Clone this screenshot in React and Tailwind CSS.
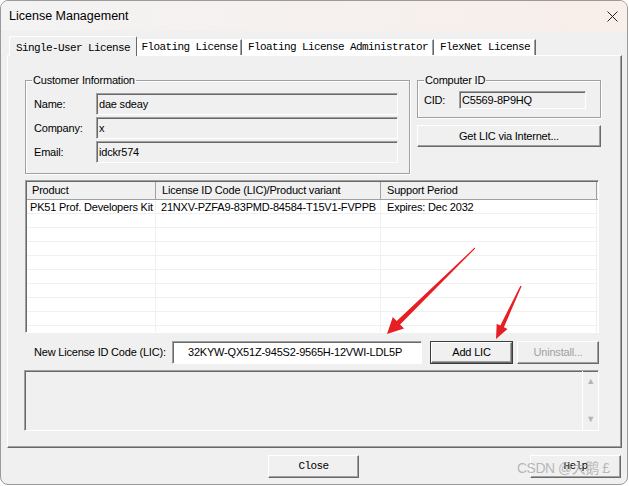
import React from "react";

const sans = "font-['Liberation_Sans',Arial,sans-serif] text-[11px] tracking-[-0.2px] text-black";
const mono = "font-['Liberation_Mono','Courier_New',monospace] text-[11px] tracking-[-0.6px] text-black";

// classic 3D edges
const sunken =
  "border border-t-[#a0a0a0] border-l-[#a0a0a0] border-r-white border-b-white shadow-[inset_1px_1px_0_#696969]";
const raised =
  "border border-t-white border-l-white border-r-[#696969] border-b-[#696969] shadow-[inset_-1px_-1px_0_#a0a0a0] bg-[#f0f0f0]";

function GroupBox({ title, className, legendClass, children }) {
  return (
    <fieldset
      className={`border border-[#a0a0a0] shadow-[inset_1px_1px_0_#fff,1px_1px_0_#fff] ${className}`}
    >
      <legend className={`px-[1px] leading-[13px] ${legendClass}`}>{title}</legend>
      {children}
    </fieldset>
  );
}

function ReadOnly({ value, className }) {
  return (
    <div className={`${sunken} bg-[#f0f0f0] flex items-center pl-[2px] ${className}`}>
      {value}
    </div>
  );
}

function Tabs() {
  const tabs = [
    { label: "Single-User License", w: "w-[128px]", active: true },
    { label: "Floating License", w: "w-[105px]" },
    { label: "Floating License Administrator", w: "w-[192px]" },
    { label: "FlexNet License", w: "w-[102px]" },
  ];
  return (
    <div className={`flex items-end h-[19px] pl-[2px] ${mono}`}>
      {tabs.map((t) =>
        t.active ? (
          <div
            key={t.label}
            className={`${t.w} h-[20px] -mb-[1px] relative z-10 bg-[#f0f0f0] border-t border-l border-white border-r border-r-[#696969] rounded-t-[2px] flex items-start justify-center pt-[3px]`}
          >
            {t.label}
          </div>
        ) : (
          <div
            key={t.label}
            className={`${t.w} h-[16px] bg-white border-t border-l border-white border-r border-r-[#696969] shadow-[inset_-1px_0_0_#a0a0a0] flex items-center justify-center`}
          >
            {t.label}
          </div>
        )
      )}
    </div>
  );
}

function LicenseTable() {
  const rows = Array.from({ length: 10 });
  return (
    <div className={`${sunken} bg-white w-[574px] h-[153px] overflow-hidden mt-[6px]`}>
      <div className="flex h-[18px] bg-[#f0f0f0] border-b border-[#a0a0a0] mt-[1px] ml-[1px]">
        <div className="w-[129px] border-r border-[#a0a0a0] pl-[5px] flex items-center">Product</div>
        <div className="w-[225px] border-r border-[#a0a0a0] pl-[6px] flex items-center">
          License ID Code (LIC)/Product variant
        </div>
        <div className="w-[216px] border-r border-[#a0a0a0] pl-[6px] flex items-center">Support Period</div>
      </div>
      {rows.map((_, i) => (
        <div key={i} className="flex h-[14px] border-b border-[#f0f0f0] ml-[1px]">
          <div className="w-[129px] border-r border-[#f0f0f0] pl-[3px] leading-[14px] whitespace-nowrap">
            {i === 0 ? "PK51 Prof. Developers Kit" : ""}
          </div>
          <div className="w-[225px] border-r border-[#f0f0f0] pl-[5px] leading-[14px] whitespace-nowrap">
            {i === 0 ? "21NXV-PZFA9-83PMD-84584-T15V1-FVPPB" : ""}
          </div>
          <div className="w-[216px] border-r border-[#f0f0f0] pl-[6px] leading-[14px] whitespace-nowrap">
            {i === 0 ? "Expires: Dec 2032" : ""}
          </div>
        </div>
      ))}
    </div>
  );
}

function Arrows() {
  return (
    <svg className="absolute left-0 top-0 pointer-events-none" width="629" height="486">
      <polygon
        fill="#e81e25"
        points="475.3,248.4 400.1,324.6 404,328.5 387,334 392.8,317.1 396.7,321 474.7,247.6"
      />
      <polygon
        fill="#e81e25"
        points="521.6,286.3 503.9,327.3 507.5,329 496,339 496.7,323.8 500.3,325.5 520.4,285.7"
      />
    </svg>
  );
}

export default function App() {
  return (
    <div className="relative w-[629px] h-[486px] bg-white">
      <div className={`w-[628px] h-[485px] border border-[#9a9a9a] rounded-[8px] overflow-hidden bg-[#f0f0f0] ${sans}`}>
        {/* Title bar */}
        <div className="h-[30px] flex items-center justify-between pl-[8px] pr-[9px] bg-gradient-to-r from-[#f3f3f3] to-[#f8eeea]">
          <span className="font-['Liberation_Sans',Arial,sans-serif] text-[12.5px] tracking-normal">
            License Management
          </span>
          <svg width="11" height="11" viewBox="0 0 11 11">
            <path d="M0.5 0.5 L10.5 10.5 M10.5 0.5 L0.5 10.5" stroke="#222" strokeWidth="1" />
          </svg>
        </div>

        <div className="pl-[6px] pt-[5px]">
          <Tabs />
          {/* Tab panel */}
          <div className="w-[615px] h-[393px] border-t border-l border-white border-r border-b border-r-[#696969] border-b-[#696969] shadow-[inset_-1px_-1px_0_#a0a0a0] pl-[17px] pt-[18px]">
            <div className="flex gap-[7px]">
              <GroupBox
                title="Customer Information"
                legendClass="-ml-[2px]"
                className="w-[385px] h-[100px] pl-[8px] pt-[6px]"
              >
                {[
                  ["Name:", "dae sdeay"],
                  ["Company:", "x"],
                  ["Email:", "idckr574"],
                ].map(([label, value]) => (
                  <div key={label} className="flex items-center h-[22px] mb-[2px]">
                    <span className="w-[62px]">{label}</span>
                    <ReadOnly value={value} className="w-[302px] h-[22px]" />
                  </div>
                ))}
              </GroupBox>

              <div className="w-[184px] flex flex-col">
                <GroupBox title="Computer ID" legendClass="ml-0" className="h-[44px] pl-[6px] pt-[4px]">
                  <div className="flex items-center h-[18px]">
                    <span className="w-[35px]">CID:</span>
                    <ReadOnly value="C5569-8P9HQ" className="w-[127px] h-[18px]" />
                  </div>
                </GroupBox>
                <button className={`${raised} mt-[7px] h-[22px] w-[184px] text-center`}>
                  Get LIC via Internet...
                </button>
              </div>
            </div>

            <LicenseTable />

            <div className="flex items-center mt-[8px] h-[23px]">
              <span className="pl-[9px] w-[147px]">New License ID Code (LIC):</span>
              <div className={`${sunken} bg-white w-[250px] h-[23px] flex items-center pl-[15px]`}>
                32KYW-QX51Z-945S2-9565H-12VWI-LDL5P
              </div>
              <div className="ml-[8px] border border-[#3c3c3c] w-[83px] h-[23px]">
                <button className={`${raised} w-full h-full text-center`}>Add LIC</button>
              </div>
              <button className={`${raised} ml-[4px] w-[82px] h-[23px] text-center text-[#a0a0a0]`}>
                Uninstall...
              </button>
            </div>

            <div className={`${sunken} mt-[6px] -ml-[1px] w-[575px] h-[61px] flex justify-end`}>
              <div className="w-[16px] h-full border-l border-white flex flex-col items-center justify-between py-[6px] text-[#b4b4b4] text-[9px] leading-none">
                <span>▲</span>
                <span>▼</span>
              </div>
            </div>
          </div>

          {/* Bottom buttons */}
          <div className={`flex mt-[7px] ${mono}`}>
            <button className={`${raised} ml-[261px] w-[91px] h-[23px] text-center`}>Close</button>
            <button className={`${raised} ml-[171px] w-[91px] h-[23px] text-center`}>Help</button>
          </div>
        </div>
      </div>

      <Arrows />

      <span className="absolute left-[517px] top-[460px] font-['Liberation_Sans','Noto_Sans_CJK_SC',sans-serif] text-[14px] tracking-[-0.5px] leading-[16px] text-[#a8a8a8]/80 pointer-events-none">
        CSDN @大鹅 £
      </span>
    </div>
  );
}
